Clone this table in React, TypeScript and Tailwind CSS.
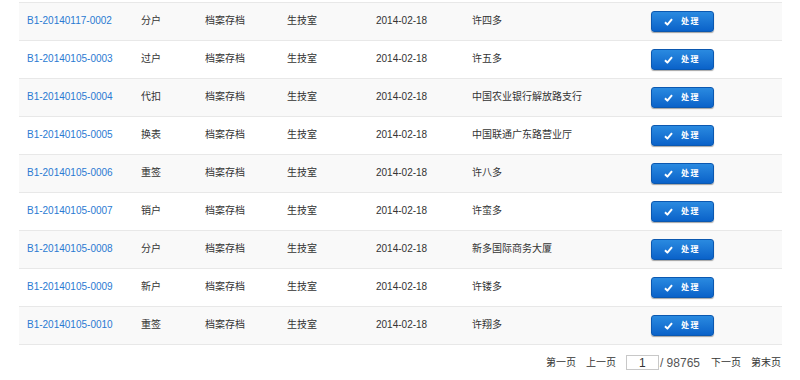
const rows = [
  ["B1-20140117-0002", "分户", "许四多"],
  ["B1-20140105-0003", "过户", "许五多"],
  ["B1-20140105-0004", "代扣", "中国农业银行解放路支行"],
  ["B1-20140105-0005", "换表", "中国联通广东路营业厅"],
  ["B1-20140105-0006", "重签", "许八多"],
  ["B1-20140105-0007", "销户", "许蛮多"],
  ["B1-20140105-0008", "分户", "新多国际商务大厦"],
  ["B1-20140105-0009", "新户", "许镂多"],
  ["B1-20140105-0010", "重签", "许翔多"],
];

function CheckIcon() {
  return (
    <svg width="9" height="8" viewBox="0 0 9 8" className="block">
      <path d="M1 4.3 L3.4 6.6 L8 1.2" fill="none" stroke="white" strokeWidth="2" strokeLinejoin="round" />
    </svg>
  );
}

function HandleButton() {
  return (
    <button className="flex items-center w-[63px] h-[21px] rounded-[3px] border border-[#0b58b0] bg-gradient-to-b from-[#2a8ae0] to-[#0a62c9] shadow-[0_1px_1px_rgba(0,0,0,0.35)] pl-[12px]">
      <CheckIcon />
      <span className="ml-[8px] text-[8px] font-bold text-white leading-none tracking-[1.5px]">处理</span>
    </button>
  );
}

export default function App() {
  return (
    <div
      className="w-[800px] h-[380px] bg-white text-[10px] text-[#333]"
      style={{ fontFamily: '"Liberation Sans", "Noto Sans CJK SC", sans-serif' }}
    >
      <div className="pt-[2px] ml-[19px] w-[763px]">
        <div className="border-t border-[#e8e8e8]">
          {rows.map((r, i) => (
            <div
              key={r[0]}
              className={`flex items-center h-[38px] pb-[2px] border-b border-[#e8e8e8] ${i % 2 === 0 ? "bg-[#f9f9f9]" : "bg-white"}`}
            >
              <div className="w-[122px] pl-[8px] text-[#2a7ad2]">{r[0]}</div>
              <div className="w-[64px]">{r[1]}</div>
              <div className="w-[82px]">档案存档</div>
              <div className="w-[89px]">生技室</div>
              <div className="w-[96px]">2014-02-18</div>
              <div className="w-[179px]">{r[2]}</div>
              <div className="flex-1 pt-[2px]">
                <HandleButton />
              </div>
            </div>
          ))}
        </div>
        <div className="flex items-center justify-end h-[34px] pt-[1px] pr-[1px]">
          <span>第一页</span>
          <span className="ml-[10px]">上一页</span>
          <div className="ml-[10px] w-[33px] h-[15px] border border-[#c8c8c8] flex items-center justify-center leading-none text-[12px]">1</div>
          <span className="ml-[1px] text-[12px] text-[#555]">/ 98765</span>
          <span className="ml-[11px]">下一页</span>
          <span className="ml-[10px]">第末页</span>
        </div>
      </div>
    </div>
  );
}
